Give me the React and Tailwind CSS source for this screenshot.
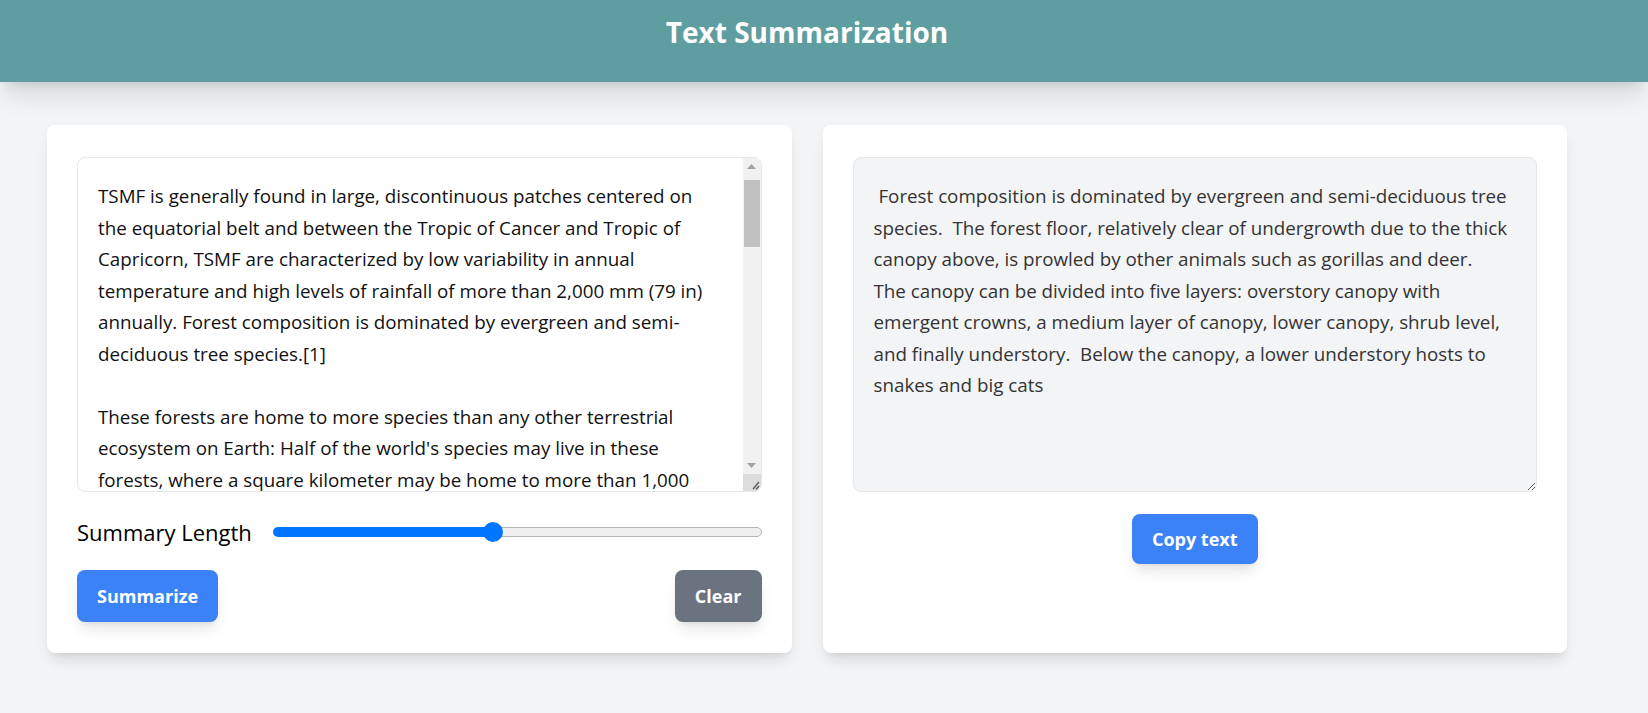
import React, { useState } from "react";

const SOURCE = `TSMF is generally found in large, discontinuous patches centered on the equatorial belt and between the Tropic of Cancer and Tropic of Capricorn, TSMF are characterized by low variability in annual temperature and high levels of rainfall of more than 2,000 mm (79 in) annually. Forest composition is dominated by evergreen and semi-deciduous tree species.[1]

These forests are home to more species than any other terrestrial ecosystem on Earth: Half of the world's species may live in these forests, where a square kilometer may be home to more than 1,000 tree species.[2] These forests are found around the globe, particularly in the Indo-Malayan Archipelago, the Amazon Basin, and the African Congo Basin.

The forest floor, relatively clear of undergrowth due to the thick canopy above, is prowled by other animals such as gorillas and deer. The canopy can be divided into five layers: overstory canopy with emergent crowns, a medium layer of canopy, lower canopy, shrub level, and finally understory. Below the canopy, a lower understory hosts to snakes and big cats.`;

const SUMMARY = ` Forest composition is dominated by evergreen and semi-deciduous tree species.  The forest floor, relatively clear of undergrowth due to the thick canopy above, is prowled by other animals such as gorillas and deer.
The canopy can be divided into five layers: overstory canopy with emergent crowns, a medium layer of canopy, lower canopy, shrub level, and finally understory.  Below the canopy, a lower understory hosts to snakes and big cats`;

const font = { fontFamily: '"Open Sans", "Noto Sans", sans-serif' };

const Arrow = ({ down }) => (
  <svg width="9" height="5" viewBox="0 0 9 5" className={down ? "rotate-180" : ""}>
    <path d="M4.5 0 L9 5 L0 5 Z" fill="#a3a3a3" />
  </svg>
);

const Grip = () => (
  <svg width="10" height="10" viewBox="0 0 10 10">
    <path d="M9 2 L3 9 M9 6 L6 9.5" stroke="#555" strokeWidth="1.2" fill="none" />
  </svg>
);

// desktop-style scrollbar drawn beside the textarea
const Scrollbar = () => (
  <div className="flex w-[18px] shrink-0 flex-col bg-[#f1f1f1]">
    <div className="flex h-[17px] items-center justify-center">
      <Arrow />
    </div>
    <div className="flex-1 px-px pt-[5px]">
      <div className="h-[67px] bg-[#c1c1c1]" />
    </div>
    <div className="flex h-[17px] items-center justify-center">
      <Arrow down />
    </div>
    <div className="flex h-[17px] items-end justify-end bg-[#dcdcdc] pb-px pr-px">
      <Grip />
    </div>
  </div>
);

export default function App() {
  const [text, setText] = useState(SOURCE);
  const [length] = useState(45);

  return (
    <div className="min-h-screen bg-[#f3f4f6]" style={font}>
      {/* header */}
      <header className="h-[82px] bg-[#5f9ea0] shadow-xl">
        <div className="w-[1614px] pt-[12px] text-center">
          <h1 className="text-[28px] font-bold leading-10 text-white">Text Summarization</h1>
        </div>
      </header>

      <main className="ml-[47px] mt-[43px] grid w-[1520px] grid-cols-2 gap-[31px]">
        {/* input card */}
        <div className="rounded-lg bg-white px-[30px] pb-[31px] pt-8 shadow-lg">
          <div className="flex h-[335px] overflow-hidden rounded-lg border border-gray-200">
            <textarea
              value={text}
              onChange={(e) => setText(e.target.value)}
              className="block h-full min-w-0 flex-1 resize-none overflow-hidden px-5 pb-4 pt-[23px] text-[18.8px] leading-[31.5px] text-[#111] outline-none"
            />
            <Scrollbar />
          </div>

          <div className="mt-[24px] flex items-center gap-[21px]">
            <span className="text-[22px] font-medium leading-8 text-black">Summary Length</span>
            <div className="flex h-5 flex-1 items-center" title={length}>
              <div className="h-[10px] rounded-l-full bg-[#0075ff]" style={{ width: `${length}%` }} />
              <div className="relative z-10 -mx-[10px] h-5 w-5 shrink-0 rounded-full bg-[#0075ff]" />
              <div className="h-[10px] flex-1 rounded-r-full border border-[#b5b5b5] bg-[#efefef]" />
            </div>
          </div>

          <div className="mt-[22px] flex items-center justify-between">
            <button className="rounded-lg bg-[#3b82f6] px-5 py-3 text-lg font-bold leading-7 text-white shadow-lg">
              Summarize
            </button>
            <button className="rounded-lg bg-[#6b7280] px-5 py-3 text-lg font-bold leading-7 text-white shadow-lg">
              Clear
            </button>
          </div>
        </div>

        {/* output card */}
        <div className="flex flex-col items-center rounded-lg bg-white px-[30px] pt-8 shadow-lg">
          <textarea
            readOnly
            value={SUMMARY}
            className="block h-[335px] w-full resize-y rounded-lg border border-gray-200 bg-[#f3f4f6] px-5 pb-4 pt-[23px] text-[18.8px] leading-[31.5px] text-[#333] outline-none"
          />
          <button className="mt-[22px] rounded-lg bg-[#3b82f6] px-5 py-[11px] text-lg font-bold leading-7 text-white shadow-lg">
            Copy text
          </button>
        </div>
      </main>
    </div>
  );
}
